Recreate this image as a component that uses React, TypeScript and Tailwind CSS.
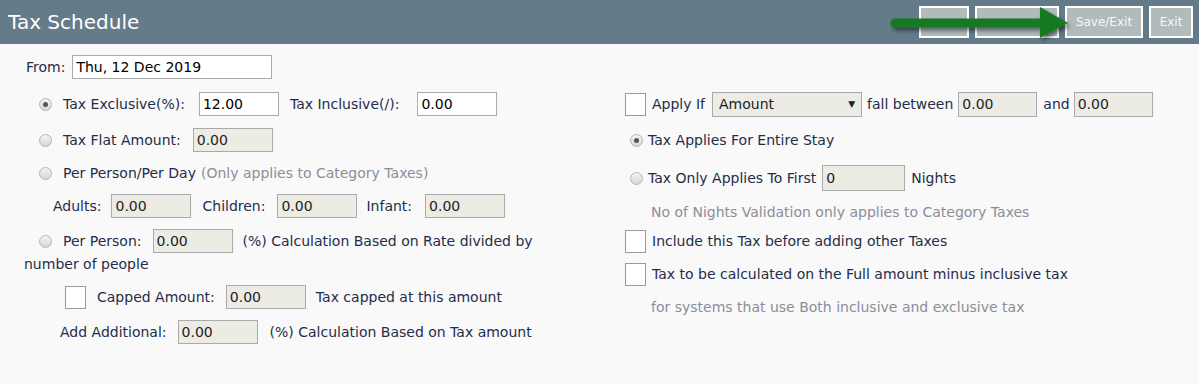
import React from "react";

const font = { fontFamily: "Verdana, 'DejaVu Sans', sans-serif" };

function Radio({ checked = false }: { checked?: boolean }) {
  return (
    <span className="inline-flex h-[13px] w-[13px] shrink-0 items-center justify-center rounded-full border border-[#b5b5b5] bg-gradient-to-b from-[#f4f4f4] to-[#d6d6d6]">
      {checked && <span className="h-[5px] w-[5px] rounded-full bg-[#555]" />}
    </span>
  );
}

function Check() {
  return <span className="inline-block h-[23px] w-[21px] shrink-0 border border-[#9a9a9a] bg-white" />;
}

function Input({ value, w = 80, white = false, h = 24 }: { value: string; w?: number; white?: boolean; h?: number }) {
  return (
    <span
      className={`inline-flex shrink-0 items-center border border-[#aaaaaa] pl-[3px] text-[14px] ${white ? "bg-white text-black" : "bg-[#ecebe4] text-[#222]"}`}
      style={{ width: w, height: h }}
    >
      {value}
    </span>
  );
}

export default function App() {
  return (
    <div className="relative h-[384px] w-[1199px] overflow-hidden bg-[#f9f9f9] text-[14px] text-[#252c4a]" style={font}>
      {/* Header */}
      <div className="flex h-[44px] items-center justify-between bg-[#647b89] pl-[8px] pr-[6px]">
        <div className="text-[20px] text-white">Tax Schedule</div>
        <div className="flex gap-[6px] text-[12px] text-[#f7f7f7]">
          <div className="h-[32px] w-[50px] border-2 border-white bg-[#b1bbbc]" />
          <div className="h-[32px] w-[84px] border-2 border-white bg-[#b1bbbc]" />
          <div className="flex h-[32px] w-[78px] items-center justify-center border-2 border-white bg-[#b1bbbc]">Save/Exit</div>
          <div className="flex h-[32px] w-[44px] items-center justify-center border-2 border-white bg-[#b1bbbc]">Exit</div>
        </div>
      </div>

      {/* Arrow overlay */}
      <svg className="absolute left-[880px] top-[2px]" width="200" height="42" viewBox="0 0 200 42">
        <defs>
          <filter id="sh" x="-10%" y="-30%" width="130%" height="180%">
            <feDropShadow dx="2" dy="3" stdDeviation="2" floodColor="#000" floodOpacity="0.5" />
          </filter>
        </defs>
        <g filter="url(#sh)">
          <line x1="15" y1="21" x2="165" y2="21" stroke="#137a20" strokeWidth="9" strokeLinecap="round" />
          <polygon points="160,5 188,21 160,36" fill="#137a20" />
        </g>
      </svg>

      <div className="flex">
        {/* Left column */}
        <div className="w-[600px] shrink-0">
          <div className="mt-[11px] flex h-[24px] items-center pl-[26px]">
            <span className="mr-[7px]">From:</span>
            <Input value="Thu, 12 Dec 2019" w={200} white />
          </div>
          <div className="mt-[13px] flex h-[24px] items-center pl-[39px]">
            <Radio checked />
            <span className="ml-[11px] mr-[14px]">Tax Exclusive(%):</span>
            <Input value="12.00" white />
            <span className="ml-[11px] mr-[18px]">Tax Inclusive(/):</span>
            <Input value="0.00" white />
          </div>
          <div className="mt-[12px] flex h-[24px] items-center pl-[39px]">
            <Radio />
            <span className="ml-[11px] mr-[12px]">Tax Flat Amount:</span>
            <Input value="0.00" />
          </div>
          <div className="mt-[9px] flex h-[24px] items-center pl-[39px]">
            <Radio />
            <span className="ml-[11px]">Per Person/Per Day</span>
            <span className="ml-[5px] text-[#8a8e98]">(Only applies to Category Taxes)</span>
          </div>
          <div className="mt-[9px] flex h-[24px] items-center pl-[53px]">
            <span className="mr-[10px]">Adults:</span>
            <Input value="0.00" />
            <span className="ml-[11px] mr-[12px]">Children:</span>
            <Input value="0.00" />
            <span className="ml-[9px] mr-[13px]">Infant:</span>
            <Input value="0.00" />
          </div>
          <div className="mt-[11px] flex h-[24px] items-center pl-[39px]">
            <Radio />
            <span className="ml-[11px] mr-[11px]">Per Person:</span>
            <Input value="0.00" />
            <span className="ml-[10px]">(%) Calculation Based on Rate divided by</span>
          </div>
          <div className="flex h-[22px] items-center pl-[24px]">number of people</div>
          <div className="mt-[10px] flex h-[24px] items-center pl-[65px]">
            <Check />
            <span className="ml-[11px] mr-[11px]">Capped Amount:</span>
            <Input value="0.00" />
            <span className="ml-[10px]">Tax capped at this amount</span>
          </div>
          <div className="mt-[11px] flex h-[24px] items-center pl-[60px]">
            <span className="mr-[11px]">Add Additional:</span>
            <Input value="0.00" />
            <span className="ml-[12px]">(%) Calculation Based on Tax amount</span>
          </div>
        </div>

        {/* Right column */}
        <div className="pl-[25px]">
          <div className="mt-[48px] flex h-[25px] items-center">
            <Check />
            <span className="ml-[6px] mr-[7px]">Apply If</span>
            <span className="flex h-[25px] w-[150px] items-center justify-between border border-[#aaaaaa] bg-[#ecebe4] pl-[6px] pr-[6px] text-[#222]">
              <span>Amount</span>
              <span className="text-[9px]">▼</span>
            </span>
            <span className="ml-[5px] mr-[5px]">fall between</span>
            <Input value="0.00" w={79} h={25} />
            <span className="ml-[6px] mr-[4px]">and</span>
            <Input value="0.00" w={79} h={25} />
          </div>
          <div className="mt-[11px] flex h-[24px] items-center pl-[5px]">
            <Radio checked />
            <span className="ml-[5px]">Tax Applies For Entire Stay</span>
          </div>
          <div className="mt-[13px] flex h-[26px] items-center pl-[5px]">
            <Radio />
            <span className="ml-[5px] mr-[6px]">Tax Only Applies To First</span>
            <Input value="0" w={83} h={26} />
            <span className="ml-[6px]">Nights</span>
          </div>
          <div className="mt-[10px] flex h-[22px] items-center pl-[26px] text-[#8a8e98]">
            No of Nights Validation only applies to Category Taxes
          </div>
          <div className="mt-[7px] flex h-[23px] items-center">
            <Check />
            <span className="ml-[6px]">Include this Tax before adding other Taxes</span>
          </div>
          <div className="mt-[10px] flex h-[23px] items-center">
            <Check />
            <span className="ml-[6px]">Tax to be calculated on the Full amount minus inclusive tax</span>
          </div>
          <div className="mt-[10px] flex h-[22px] items-center pl-[26px] text-[#8a8e98]">
            for systems that use Both inclusive and exclusive tax
          </div>
        </div>
      </div>
    </div>
  );
}
